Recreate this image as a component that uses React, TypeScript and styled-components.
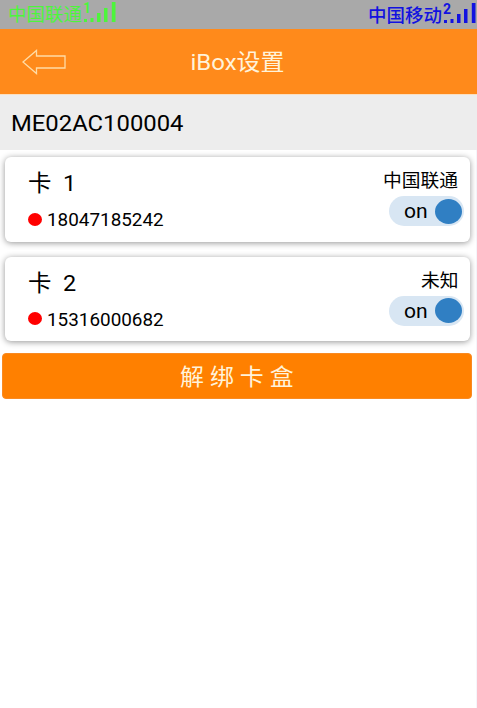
//React
import { useState } from 'react';
//styled
import styled, { createGlobalStyle } from 'styled-components';

const GlobalStyle = createGlobalStyle`
  * {
    box-sizing: border-box;
  }
  body {
    margin: 0;
    background-color: #ffffff;
    color: #000000;
    font-family: Roboto, "Noto Sans CJK SC", sans-serif;
  }
`;
const Container = styled.div`
  width: 100%;
  height: 708px;
  box-shadow: inset -1px 0 #f5f5fa;
  overflow: hidden;
`;
const StatusBar = styled.div`
  width: 477px;
  height: 29px;
  padding: 0 1px 0 8px;
  display: flex;
  justify-content: space-between;
  background-color: #a9a9a9;
`;
const Operator = styled.div<{ $color: string }>`
  display: flex;
  align-items: flex-start;
  color: ${props => props.$color};
`;
const OperatorName = styled.span<{ $bold?: boolean }>`
  width: 75px;
  padding-top: ${props => (props.$bold ? '1px' : '0')};
  font-size: 18.5px;
  line-height: 30px;
  font-weight: ${props => (props.$bold ? 500 : 400)};
  white-space: nowrap;
`;
const Header = styled.header`
  width: 477px;
  height: 66px;
  padding: 0 22px;
  display: grid;
  grid-template-columns: 44px 1fr 44px;
  align-items: center;
  background-color: #ff8a1b;
  border-bottom: 1px solid #fbdfc0;
`;
const Title = styled.h1`
  margin: 3px 0 0;
  padding-right: 2px;
  color: #fff3da;
  font-size: 22.7px;
  font-weight: 400;
  line-height: 34px;
  text-align: center;
`;
const BackButton = styled.button`
  height: 26px;
  padding: 0;
  border: 0;
  background: none;
  line-height: 0;
`;
// roboto a little wider than its normal width
const Wide = styled.span<{ $origin?: string }>`
  display: inline-block;
  white-space: pre;
  transform: scaleX(1.055);
  transform-origin: ${props => props.$origin || 'left'};
`;
const Serial = styled.div`
  width: 477px;
  height: 55px;
  padding: 1px 0 0 10.5px;
  font-size: 22.6px;
  line-height: 55px;
  background-color: #ededed;
`;
const CardList = styled.ul`
  margin: 0;
  padding: 7px 7.5px 0 5px;
  display: flex;
  flex-direction: column;
  gap: 15px;
  list-style: none;
`;
const Card = styled.li`
  height: 84.5px;
  padding: 10px 6px 0 23px;
  display: flex;
  justify-content: space-between;
  border-radius: 6px;
  background-color: #ffffff;
  box-shadow: 0 1px 6px rgba(0, 0, 0, 0.42);
`;
const CardTitle = styled.h2`
  margin: 0;
  height: 34px;
  font-size: 22.2px;
  font-weight: 400;
  line-height: 33px;
`;
const Phone = styled.div`
  height: 37px;
  display: flex;
  align-items: center;
  gap: 5px;
  font-size: 17.9px;
`;
const Dot = styled.i`
  width: 14px;
  height: 13px;
  margin-bottom: 1px;
  border-radius: 50%;
  background-color: #ff0000;
`;
const CardSide = styled.div`
  display: flex;
  flex-direction: column;
  align-items: flex-end;
`;
const CardOperator = styled.span`
  height: 29px;
  padding-right: 5px;
  font-size: 17.8px;
  line-height: 27px;
`;
const Toggle = styled.button<{ $on: boolean }>`
  width: 75px;
  height: 30px;
  padding: 0 2px 0 15px;
  display: flex;
  flex-direction: ${props => (props.$on ? 'row' : 'row-reverse')};
  align-items: center;
  justify-content: space-between;
  border: 0;
  border-radius: 15px;
  color: #000000;
  background-color: #d8e6f3;
  font-family: inherit;
  font-size: 20px;
`;
const Knob = styled.i`
  width: 27px;
  height: 25px;
  border-radius: 50%;
  background-color: #307fc3;
`;
const UnbindButton = styled.button`
  width: 470px;
  height: 46px;
  margin: 12px 0 0 2px;
  padding: 3px 0 0;
  display: block;
  border: 1px solid #f98a22;
  border-radius: 4px;
  color: #fff3da;
  background-color: #ff8000;
  font-family: inherit;
  font-size: 22.7px;
  line-height: 41px;
  text-align: center;
`;

interface CardData {
  id: number;
  operator: string;
  phone: string;
}
const CARDS: CardData[] = [
  { id: 1, operator: '中国联通', phone: '18047185242' },
  { id: 2, operator: '未知', phone: '15316000682' },
];

function Signal({ slot }: { slot: string }) {
  return (
    <svg width="33" height="29" viewBox={slot === '1' ? '0 1 33 29' : '0 0 33 29'} fill="currentColor">
      <text x="0" y="13.500" fontSize="14" fontWeight="700">{slot}</text>
      <rect x="1" y="20" width="3" height="3" />
      <rect x="7.500" y="19" width="3" height="4" />
      <rect x="14" y="14" width="3.500" height="9" />
      <rect x="21" y="9" width="3.500" height="14" />
      <rect x="28.800" y="3" width="3.700" height="20" />
    </svg>
  );
}

function SimCard({ id, operator, phone }: CardData) {
  const [on, setOn] = useState<boolean>(true);
  return (
    <Card>
      <div>
        <CardTitle><Wide>{`卡  ${id}`}</Wide></CardTitle>
        <Phone><Dot /><Wide>{phone}</Wide></Phone>
      </div>
      <CardSide>
        <CardOperator><Wide $origin="right">{operator}</Wide></CardOperator>
        <Toggle $on={on} onClick={() => setOn(!on)}>
          <Wide>{on ? 'on' : 'off'}</Wide>
          <Knob />
        </Toggle>
      </CardSide>
    </Card>
  );
}

function App() {
  return (
    <Container>
      <GlobalStyle />
      <StatusBar>
        <Operator $color="#4df53c">
          <OperatorName>中国联通</OperatorName>
          <Signal slot="1" />
        </Operator>
        <Operator $color="#1212e0">
          <OperatorName $bold>中国移动</OperatorName>
          <Signal slot="2" />
        </Operator>
      </StatusBar>
      <Header>
        <BackButton aria-label="back">
          <svg width="44" height="26" fill="none" stroke="#ffdca6" strokeWidth="1.3">
            <path d="M1 13 L14.500 1.500 V7 H43 V19 H14.500 V24.500 Z" />
          </svg>
        </BackButton>
        <Title><Wide $origin="center">iBox设置</Wide></Title>
      </Header>
      <Serial><Wide>ME02AC100004</Wide></Serial>
      <CardList>
        {CARDS.map(card => <SimCard key={card.id} {...card} />)}
      </CardList>
      <UnbindButton><Wide $origin="center">解 绑 卡 盒</Wide></UnbindButton>
    </Container>
  );
}

export default App;
